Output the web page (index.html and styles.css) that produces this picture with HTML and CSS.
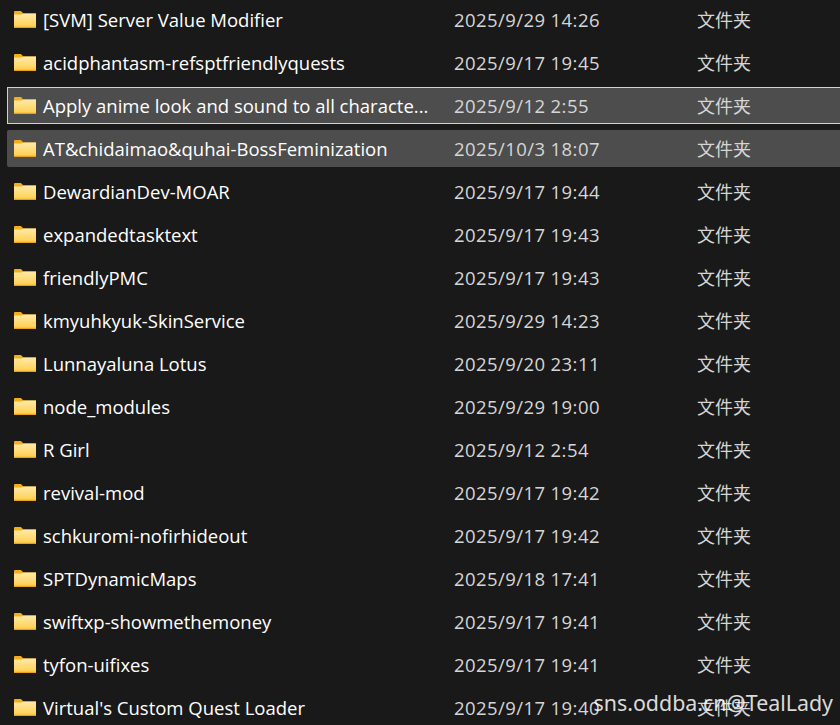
FILE: index.html
```html
<!DOCTYPE html>
<html lang="zh-CN">
<head>
<meta charset="utf-8">
<title>文件列表</title>
<link rel="stylesheet" href="styles.css">
</head>
<body>
<svg class="defs" width="0" height="0" aria-hidden="true">
  <defs>
    <linearGradient id="folderBody" x1="0" y1="0" x2="0" y2="1">
      <stop offset="0" stop-color="#ffe9a6"/>
      <stop offset="0.7" stop-color="#ffd768"/>
      <stop offset="1" stop-color="#ffc83d"/>
    </linearGradient>
    <symbol id="folder" viewBox="0 0 22 17">
      <path d="M0 1.2C0 .5.5 0 1.2 0h5.2c.4 0 .7.1 1 .4L9.4 2.5H22V6H0z" fill="#f2ae1c"/>
      <path d="M0 3.6h7.6L9.6 2.6H22V17H0z" fill="url(#folderBody)"/>
      <rect x="0" y="15.8" width="22" height="1.2" fill="#e9a21a"/>
    </symbol>
  </defs>
</svg>
<main class="list">
  <div class="row"><svg class="icon"><use href="#folder"/></svg><span class="name">[SVM] Server Value Modifier</span><span class="date">2025/9/29 14:26</span><span class="type">文件夹</span></div>
  <div class="row"><svg class="icon"><use href="#folder"/></svg><span class="name">acidphantasm-refsptfriendlyquests</span><span class="date">2025/9/17 19:45</span><span class="type">文件夹</span></div>
  <div class="row focused"><svg class="icon"><use href="#folder"/></svg><span class="name">Apply anime look and sound to all characte...</span><span class="date">2025/9/12 2:55</span><span class="type">文件夹</span></div>
  <div class="row selected"><svg class="icon"><use href="#folder"/></svg><span class="name">AT&amp;chidaimao&amp;quhai-BossFeminization</span><span class="date">2025/10/3 18:07</span><span class="type">文件夹</span></div>
  <div class="row"><svg class="icon"><use href="#folder"/></svg><span class="name">DewardianDev-MOAR</span><span class="date">2025/9/17 19:44</span><span class="type">文件夹</span></div>
  <div class="row"><svg class="icon"><use href="#folder"/></svg><span class="name">expandedtasktext</span><span class="date">2025/9/17 19:43</span><span class="type">文件夹</span></div>
  <div class="row"><svg class="icon"><use href="#folder"/></svg><span class="name">friendlyPMC</span><span class="date">2025/9/17 19:43</span><span class="type">文件夹</span></div>
  <div class="row"><svg class="icon"><use href="#folder"/></svg><span class="name">kmyuhkyuk-SkinService</span><span class="date">2025/9/29 14:23</span><span class="type">文件夹</span></div>
  <div class="row"><svg class="icon"><use href="#folder"/></svg><span class="name">Lunnayaluna Lotus</span><span class="date">2025/9/20 23:11</span><span class="type">文件夹</span></div>
  <div class="row"><svg class="icon"><use href="#folder"/></svg><span class="name">node_modules</span><span class="date">2025/9/29 19:00</span><span class="type">文件夹</span></div>
  <div class="row"><svg class="icon"><use href="#folder"/></svg><span class="name">R Girl</span><span class="date">2025/9/12 2:54</span><span class="type">文件夹</span></div>
  <div class="row"><svg class="icon"><use href="#folder"/></svg><span class="name">revival-mod</span><span class="date">2025/9/17 19:42</span><span class="type">文件夹</span></div>
  <div class="row"><svg class="icon"><use href="#folder"/></svg><span class="name">schkuromi-nofirhideout</span><span class="date">2025/9/17 19:42</span><span class="type">文件夹</span></div>
  <div class="row"><svg class="icon"><use href="#folder"/></svg><span class="name">SPTDynamicMaps</span><span class="date">2025/9/18 17:41</span><span class="type">文件夹</span></div>
  <div class="row"><svg class="icon"><use href="#folder"/></svg><span class="name">swiftxp-showmethemoney</span><span class="date">2025/9/17 19:41</span><span class="type">文件夹</span></div>
  <div class="row"><svg class="icon"><use href="#folder"/></svg><span class="name">tyfon-uifixes</span><span class="date">2025/9/17 19:41</span><span class="type">文件夹</span></div>
  <div class="row"><svg class="icon"><use href="#folder"/></svg><span class="name">Virtual's Custom Quest Loader</span><span class="date">2025/9/17 19:40</span><span class="type">文件夹</span></div>
</main>
<div class="watermark">sns.oddba.cn@TealLady</div>
</body>
</html>
```
FILE: styles.css
```css
html, body {
  margin: 0;
  height: 100%;
  overflow: hidden;
  background: #191919;
}
body {
  position: relative;
  font-family: "Open Sans", "Noto Sans CJK SC", sans-serif;
  font-size: 18.5px;
  color: #fff;
}
.defs { position: absolute; }
.list {
  display: flex;
  flex-direction: column;
  gap: 6px;
  padding: 1px 0 0 7px;
}
.row {
  flex: none;
  display: flex;
  align-items: center;
  height: 37px;
  box-sizing: border-box;
  padding-left: 7px;
  white-space: nowrap;
}
.row.selected { background: #4d4d4d; border-radius: 2px 0 0 2px; }
.row.focused {
  background: #4d4d4d;
  border: 1px solid #d2d2d2;
  border-right: none;
  padding-left: 6px;
}
.icon { flex: none; width: 22px; height: 17px; margin-right: 7px; margin-top: -1px; }
.name {
  flex: none;
  width: 388px;
  margin-right: 23px;
}
.date {
  flex: none;
  width: 243px;
  color: #d6d6d6;
  letter-spacing: 0.42px;
}
.type {
  flex: none;
  color: #d6d6d6;
  font-size: 18px;
  margin-bottom: 2px;
}
.watermark {
  position: absolute;
  right: 7px;
  bottom: 8px;
  font-family: "Noto Sans", sans-serif;
  font-size: 21.4px;
  color: rgba(255, 255, 255, 0.85);
}
```
